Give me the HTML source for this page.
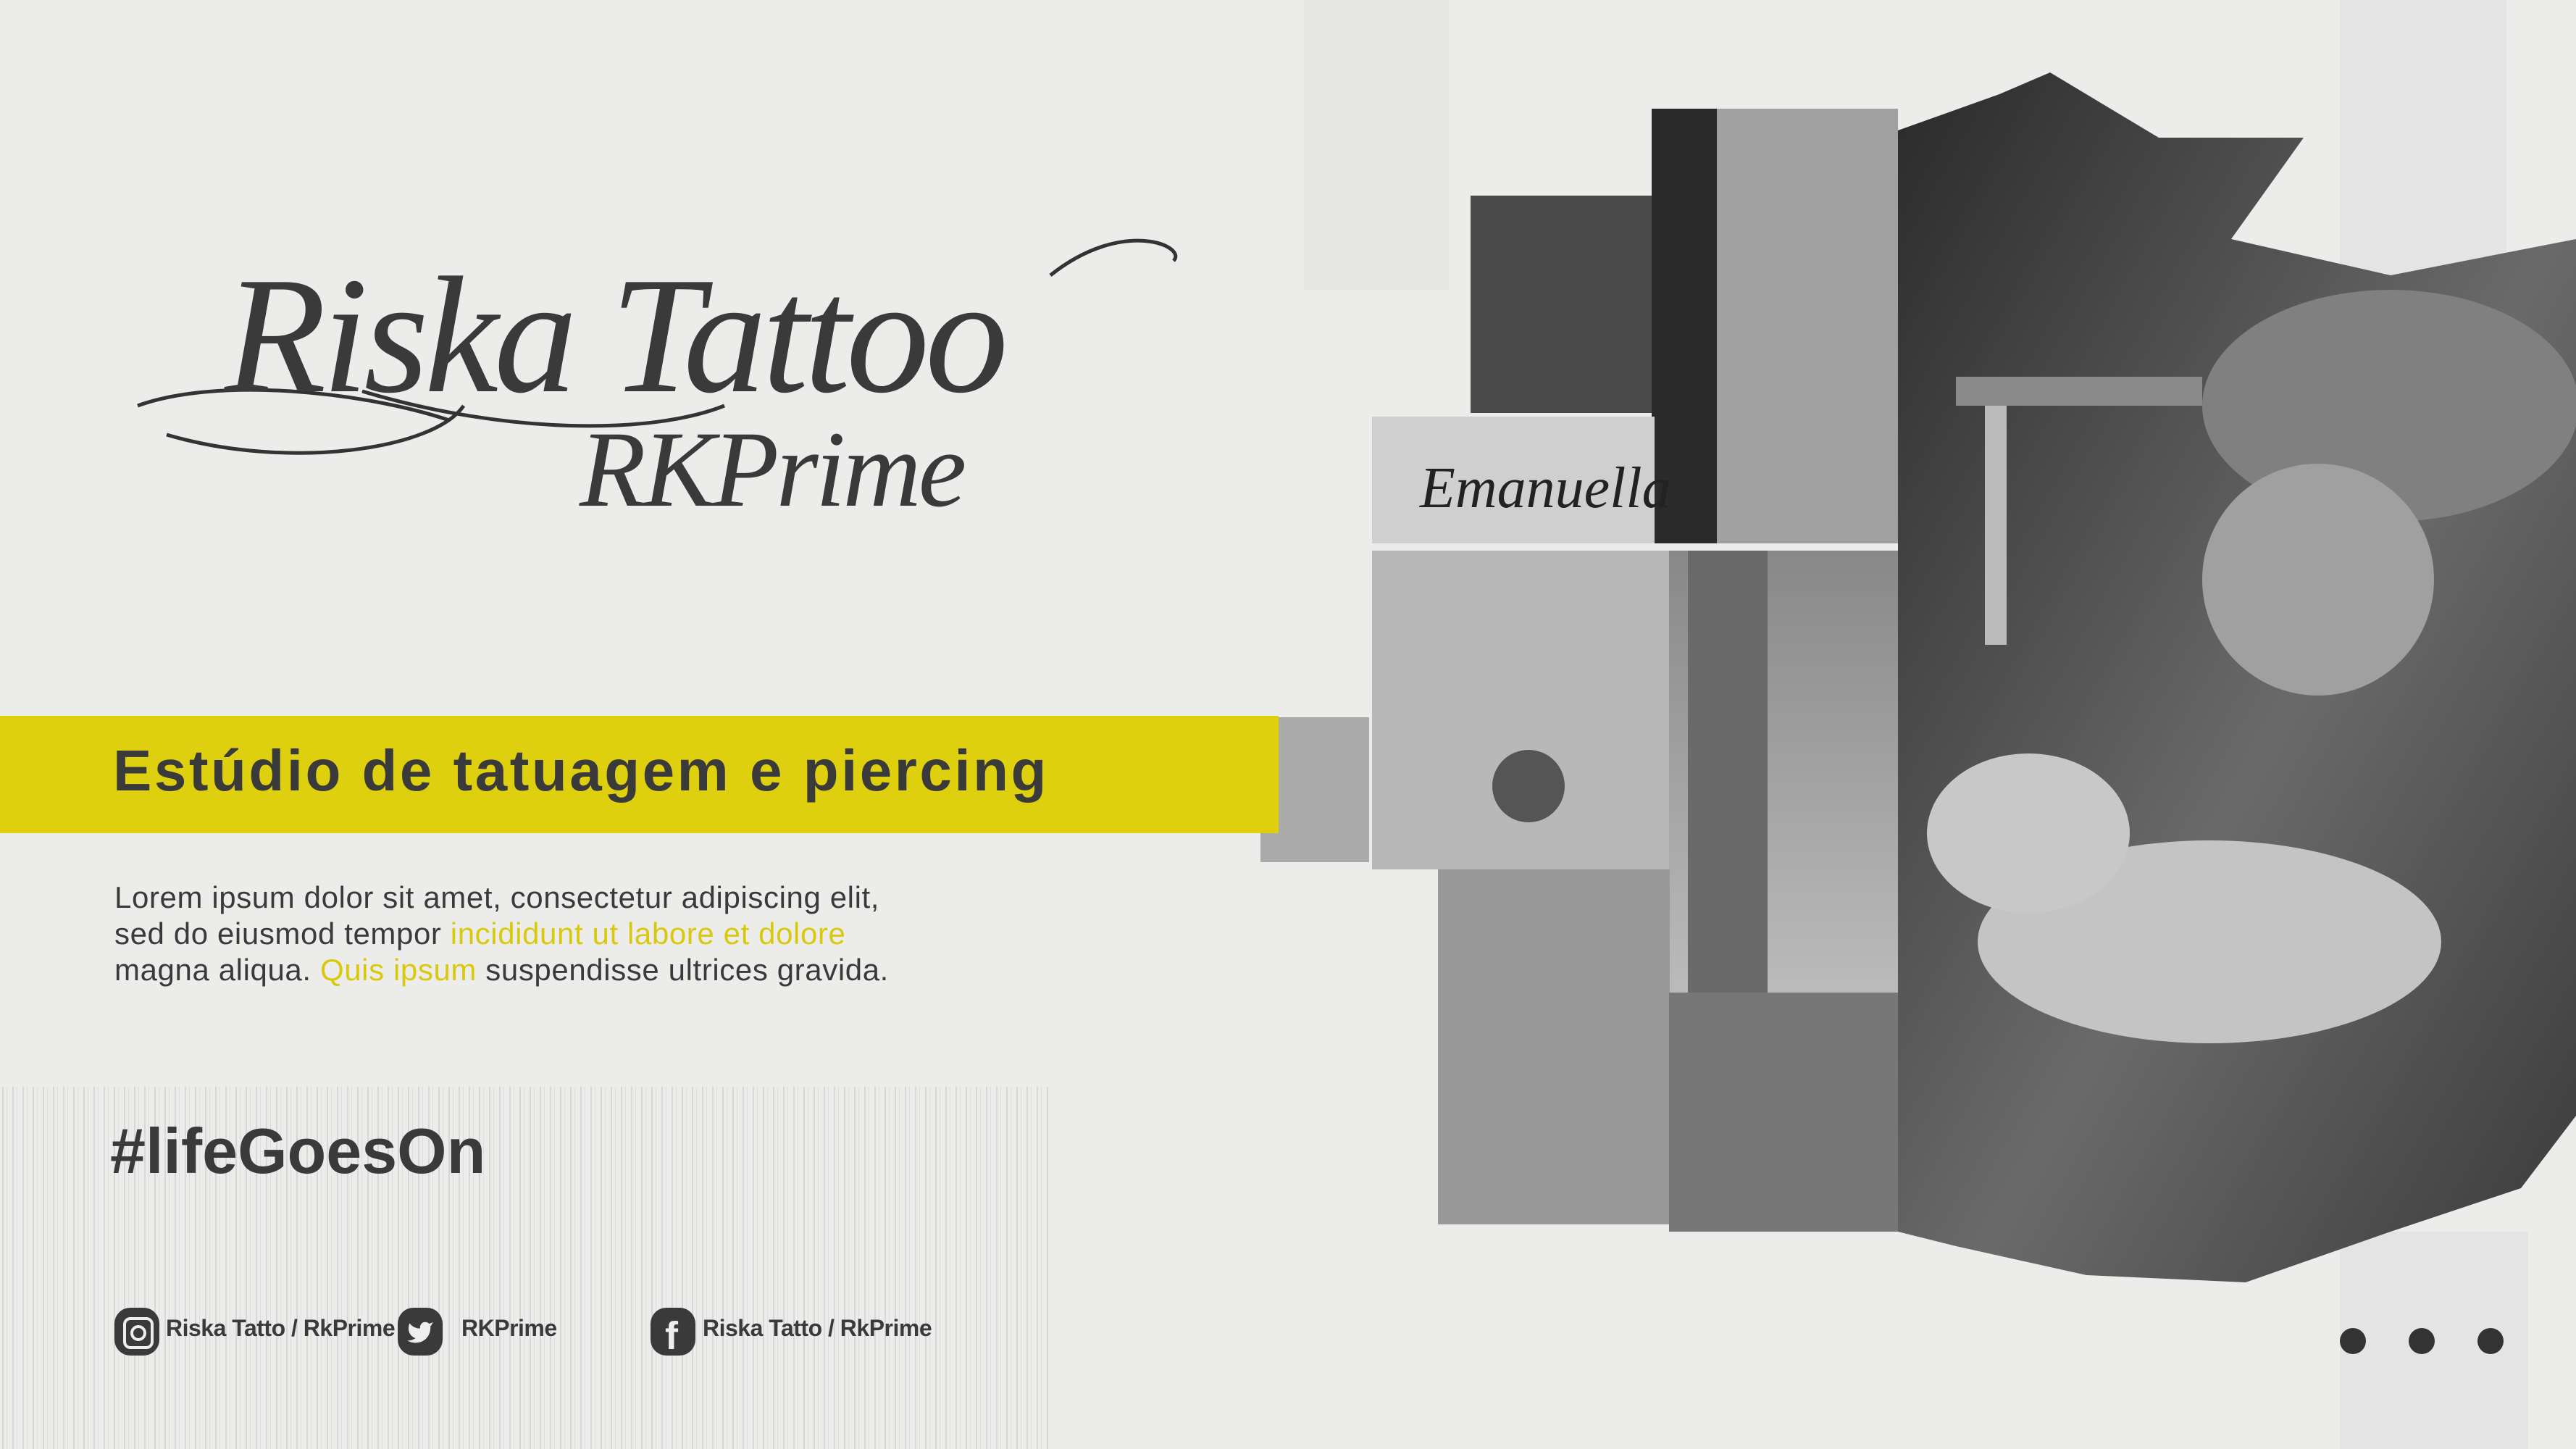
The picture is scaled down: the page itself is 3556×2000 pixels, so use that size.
<!DOCTYPE html>
<html><head><meta charset="utf-8"><style>
html,body{margin:0;padding:0}
body{width:3556px;height:2000px;position:relative;overflow:hidden;background:#ecedeb;font-family:"Liberation Sans",sans-serif;color:#383838}
.abs{position:absolute}
.band{left:0;top:988px;width:1765px;height:162px;background:#dfd00f}
h1{position:absolute;left:156px;top:1018px;margin:0;font-size:80px;font-weight:bold;letter-spacing:3.5px;color:#3a3a3a;white-space:nowrap}
.p{left:158px;top:1214px;font-size:42px;line-height:50px;color:#3a3a3a;letter-spacing:0.6px;white-space:nowrap}
.y{color:#d9c90d}
.tag{left:152px;top:1538px;font-size:88px;font-weight:bold;color:#3a3a3a;letter-spacing:0px}
.soc{top:1815px;font-size:32px;font-weight:bold;color:#3a3a3a;letter-spacing:-0.5px}
.ic{top:1805px;width:62px;height:66px;border-radius:22px;background:#3a3a3a}
.dot{top:1833px;width:36px;height:36px;border-radius:50%;background:#333}
</style></head><body>
<svg class="abs" style="left:0;top:0" width="3556" height="2000">
<defs>
<linearGradient id="g1" x1="0" y1="0" x2="1" y2="1"><stop offset="0" stop-color="#2a2a2a"/><stop offset="0.55" stop-color="#6a6a6a"/><stop offset="1" stop-color="#3a3a3a"/></linearGradient>
<linearGradient id="g2" x1="0" y1="0" x2="0" y2="1"><stop offset="0" stop-color="#888"/><stop offset="1" stop-color="#bbb"/></linearGradient>
<pattern id="st" width="14" height="40" patternUnits="userSpaceOnUse"><rect x="3" width="2" height="40" fill="#c9c9c9"/><rect x="9" width="1" height="40" fill="#d4d4d4"/></pattern>
</defs>
<rect x="0" y="1500" width="1450" height="500" fill="url(#st)" opacity="0.6"/>
<rect x="1800" y="0" width="200" height="400" fill="#d8d8d8" opacity="0.3"/>
<rect x="3230" y="0" width="230" height="560" fill="#d6d6d6" opacity="0.4"/>
<rect x="3230" y="1700" width="260" height="300" fill="#d8d8d8" opacity="0.4"/>
<!-- main photo -->
<path d="M2620 180 L2760 130 L2830 100 L2980 190 L3180 190 L3080 330 L3300 380 L3556 330 L3556 1540 L3480 1640 L3300 1700 L3100 1770 L2880 1760 L2700 1720 L2620 1700 Z" fill="url(#g1)"/>
<ellipse cx="3300" cy="560" rx="260" ry="160" fill="#808080"/>
<ellipse cx="3200" cy="800" rx="160" ry="160" fill="#a0a0a0"/>
<ellipse cx="3050" cy="1300" rx="320" ry="140" fill="#c4c4c4"/>
<ellipse cx="2800" cy="1150" rx="140" ry="110" fill="#c8c8c8"/>
<rect x="2700" y="520" width="340" height="40" fill="#8a8a8a"/>
<rect x="2740" y="560" width="30" height="330" fill="#bbb"/>
<!-- tiles -->
<rect x="2030" y="270" width="250" height="300" fill="#4a4a4a"/>
<rect x="2280" y="150" width="340" height="600" fill="#a0a0a0"/>
<rect x="2280" y="150" width="90" height="600" fill="#2a2a2a"/>
<rect x="1894" y="575" width="390" height="175" fill="#cfcfcf"/>
<text x="1960" y="700" font-family="Liberation Serif" font-style="italic" font-size="80" fill="#222">Emanuella</text>
<rect x="1894" y="760" width="410" height="440" fill="#b8b8b8"/>
<circle cx="2110" cy="1085" r="50" fill="#555"/>
<rect x="2304" y="760" width="316" height="610" fill="url(#g2)"/>
<rect x="2330" y="760" width="110" height="610" fill="#6a6a6a"/>
<rect x="1985" y="1200" width="320" height="490" fill="#999"/>
<rect x="2304" y="1370" width="316" height="330" fill="#777"/>
<rect x="1740" y="990" width="150" height="200" fill="#aaa"/>
<!-- logo -->
<path d="M190 560 C300 520 500 540 620 580 M230 600 C400 650 600 620 640 560 M1450 380 C1550 300 1640 340 1620 360 M500 540 C700 600 900 600 1000 560" stroke="#333" stroke-width="5" fill="none"/>
<text x="310" y="540" font-family="Liberation Serif" font-style="italic" font-size="230" fill="#3a3a3a" letter-spacing="-6">Riska Tattoo</text>
<text x="800" y="698" font-family="Liberation Serif" font-style="italic" font-size="150" fill="#3a3a3a" letter-spacing="-4">RKPrime</text>
</svg>
<div class="abs band"></div>
<h1>Estúdio de tatuagem e piercing</h1>
<div class="abs p">Lorem ipsum dolor sit amet, consectetur adipiscing elit,<br>sed do eiusmod tempor <span class="y">incididunt ut labore et dolore</span><br>magna aliqua. <span class="y">Quis ipsum</span> suspendisse ultrices gravida.</div>
<div class="abs tag">#lifeGoesOn</div>
<div class="abs ic" style="left:158px"><div style="position:absolute;left:12px;top:13px;width:34px;height:36px;border:4px solid #eee;border-radius:10px"></div><div style="position:absolute;left:22px;top:24px;width:14px;height:14px;border:4px solid #eee;border-radius:50%"></div></div>
<div class="abs soc" style="left:229px">Riska Tatto / RkPrime</div>
<div class="abs ic" style="left:549px"><svg width="62" height="66" viewBox="0 0 24 24" style="position:absolute;left:0;top:0"><path transform="translate(4.5 5) scale(0.62)" fill="#eee" d="M23 3a10.9 10.9 0 0 1-3.14 1.53 4.48 4.48 0 0 0-7.86 3v1A10.66 10.66 0 0 1 3 4s-4 9 5 13a11.64 11.64 0 0 1-7 2c9 5 20 0 20-11.5a4.5 4.5 0 0 0-.08-.83A7.72 7.72 0 0 0 23 3z"/></svg></div>
<div class="abs soc" style="left:637px">RKPrime</div>
<div class="abs ic" style="left:898px"><div style="position:absolute;left:20px;top:8px;color:#eee;font-size:54px;font-weight:bold">f</div></div>
<div class="abs soc" style="left:970px">Riska Tatto / RkPrime</div>
<div class="abs dot" style="left:3230px"></div>
<div class="abs dot" style="left:3325px"></div>
<div class="abs dot" style="left:3420px"></div>
</body></html>
